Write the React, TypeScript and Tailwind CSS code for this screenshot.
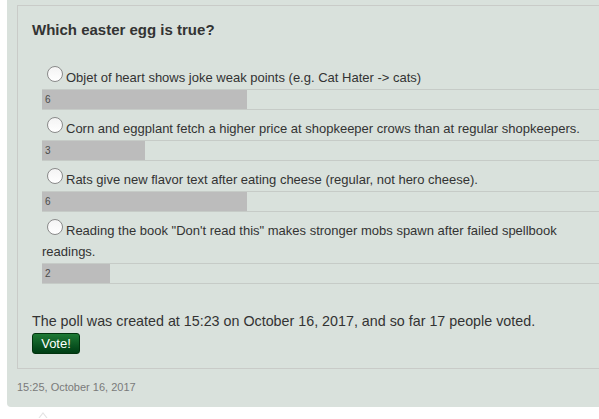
import React from "react";

const options = [
  { text: "Objet of heart shows joke weak points (e.g. Cat Hater -> cats)", votes: 6 },
  { text: "Corn and eggplant fetch a higher price at shopkeeper crows than at regular shopkeepers.", votes: 3 },
  { text: "Rats give new flavor text after eating cheese (regular, not hero cheese).", votes: 6 },
  { text: 'Reading the book "Don\'t read this" makes stronger mobs spawn after failed spellbook readings.', votes: 2 },
];

const total = 17;

function Radio() {
  return (
    <span className="ml-[5px] mr-[3px] inline-block h-[16px] w-[16px] rounded-full border border-[#8a8a8a] bg-gradient-to-b from-[#f4f4f4] to-white align-baseline" />
  );
}

function PollOption({ text, votes }: { text: string; votes: number }) {
  return (
    <div className="mb-[7px]">
      <label className="block w-[550px] text-[13px] leading-[21px] text-[#333]">
        <Radio />
        {text}
      </label>
      <div className="mt-[1px] h-[21px] w-[581px] border-y border-[#c6cbc7]">
        <div
          className="h-[19px] bg-[#bcbcbc] pl-[3px] text-[10px] leading-[19px] text-[#4a4a4a]"
          style={{ width: `${(votes / total) * 100}%` }}
        >
          {votes}
        </div>
      </div>
    </div>
  );
}

export default function App() {
  return (
    <div className="h-[419px] w-[599px] overflow-hidden bg-white font-['Liberation_Sans',Arial,sans-serif]">
      <div className="ml-[7px] w-[660px] rounded-bl-[4px] bg-[#d9e1dc] pt-[5px] pb-[13px]">
        <div className="ml-[10px] border border-[#c9cbc8] pb-[13px] pl-[14px]">
          <h2 className="mt-[14px] text-[15px] font-bold leading-[20px] text-[#333]">
            Which easter egg is true?
          </h2>
          <div className="mt-[26px] pl-[10px]">
            {options.map((o) => (
              <PollOption key={o.text} text={o.text} votes={o.votes} />
            ))}
          </div>
          <p className="mt-[27px] text-[14.3px] leading-[20px] text-[#333]">
            The poll was created at 15:23 on October 16, 2017, and so far 17 people voted.
          </p>
          <button className="mt-[1px] h-[21px] w-[48px] rounded-[3px] border border-[#00330d] bg-gradient-to-b from-[#1e7a35] to-[#003d14] text-[13px] leading-[19px] text-white">
            Vote!
          </button>
        </div>
        <div className="ml-[10px] mt-[11px] text-[11px] leading-[14px] text-[#7a7a7a]">15:25, October 16, 2017</div>
      </div>
      <svg className="ml-[38px] mt-[5px]" width="10" height="6" viewBox="0 0 10 6">
        <path d="M1 6 L5 1 L9 6" fill="none" stroke="#e4e4e4" strokeWidth="1.2" />
      </svg>
    </div>
  );
}
